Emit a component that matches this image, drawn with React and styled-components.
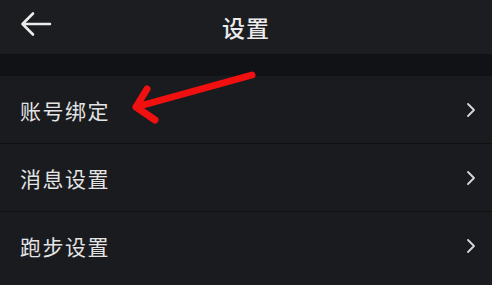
import React from 'react';
import styled, { createGlobalStyle } from 'styled-components';

const GlobalStyle = createGlobalStyle`
  html, body {
    margin: 0;
    padding: 0;
    background: #1b1c20;
  }
  body {
    font-family: "Noto Sans CJK SC", "Noto Sans", sans-serif;
  }
`;

const items = ['账号绑定', '消息设置', '跑步设置'];

function App() {
  return (
    <>
      <GlobalStyle />
      <Page>
        <Header>
          <BackButton aria-label="back">
            <svg width="32" height="26" viewBox="0 0 32 26" fill="none">
              <path
                d="M30 13H3M13 2.5L2.5 13L13 23.5"
                stroke="#ececec"
                strokeWidth="2.6"
                strokeLinecap="round"
                strokeLinejoin="round"
              />
            </svg>
          </BackButton>
          <Title>设置</Title>
        </Header>
        <Gap />
        <List>
          {items.map((label) => (
            <Row key={label}>
              <Label>{label}</Label>
              <svg width="10" height="16" viewBox="0 0 10 16" fill="none">
                <path
                  d="M2 2L8 8L2 14"
                  stroke="#d8d8d8"
                  strokeWidth="1.8"
                  strokeLinecap="round"
                  strokeLinejoin="round"
                />
              </svg>
            </Row>
          ))}
        </List>
        <Annotation width="492" height="285" viewBox="0 0 492 285">
          <path
            d="M252 75L136 107M147 89L136 107L155 120"
            stroke="#f01010"
            strokeWidth="7"
            strokeLinecap="round"
            strokeLinejoin="round"
            fill="none"
          />
        </Annotation>
      </Page>
    </>
  );
}

export default App;

// ====== Styled Components ======
const Page = styled.div`
  position: relative;
  width: 492px;
  height: 285px;
  overflow: hidden;
  background: #1b1c20;
`;

const Header = styled.div`
  position: relative;
  height: 54px;
  display: flex;
  align-items: center;
  justify-content: center;
  background: #1c1d21;
`;

const BackButton = styled.div`
  position: absolute;
  left: 20px;
  top: 11px;
  display: flex;
`;

const Title = styled.div`
  color: #ececec;
  font-size: 23px;
  font-weight: 500;
  letter-spacing: 1px;
`;

const Gap = styled.div`
  height: 22px;
  background: #111215;
`;

const List = styled.div`
  display: flex;
  flex-direction: column;
`;

const Row = styled.div`
  height: 67px;
  display: flex;
  align-items: center;
  justify-content: space-between;
  padding: 0 16px 0 20px;
  background: #1a1b1f;
  border-bottom: 1px solid #0f1012;

  &:last-child {
    border-bottom: none;
  }
`;

const Label = styled.div`
  color: #e4e4e4;
  font-size: 21px;
  letter-spacing: 1.5px;
`;

const Annotation = styled.svg`
  position: absolute;
  left: 0;
  top: 0;
  pointer-events: none;
`;
